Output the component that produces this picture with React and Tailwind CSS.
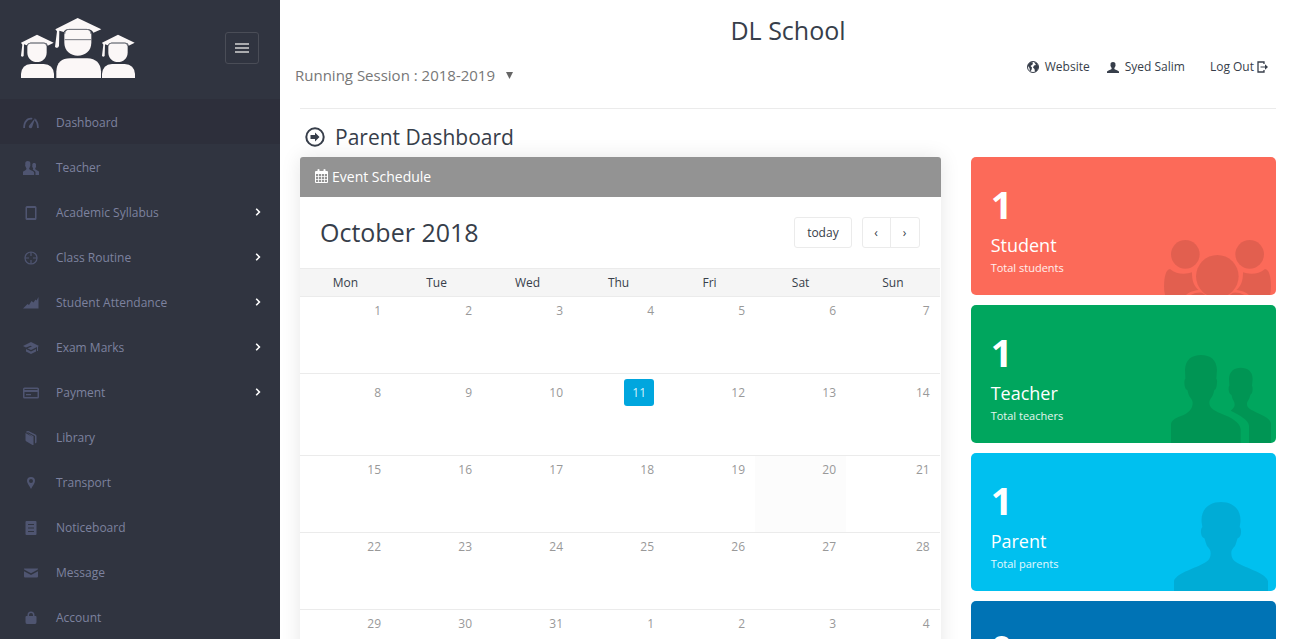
import React from 'react';

const UserShape = (props) => (
  <svg viewBox="0 0 282 267" fill="currentColor" preserveAspectRatio="none" aria-hidden="true" {...props}>
    <path d="M0 267V238C0 222 40 205 75 191C100 181 110 172 110 154C110 141 102 138 98 130C95 124 94 115 91 109C84 107 82 100 81 93C80 83 82 78 85 75L83 62C79 30 98 0 141 0C184 0 203 30 199 62L197 75C200 78 202 83 201 93C200 100 198 107 191 109C188 115 187 124 184 130C180 138 172 141 172 154C172 172 182 181 207 191C242 205 282 222 282 238V267Z" />
  </svg>
);

const UsersShape = (props) => (
  <svg viewBox="0 0 300 264" fill="currentColor" preserveAspectRatio="none" aria-hidden="true" {...props}>
    <path d="M0 264V207C2 196 12 190 30 183C52 174 65 163 65 143C65 133 56 128 52 116L49 105C42 103 41 95 40 84C40 76 41 73 43 71L42 45C43 14 62 0 90 0C118 0 137 14 138 45L136 71C138 73 139 76 138 84C137 95 136 103 130 105L127 116C123 128 115 133 115 143C115 158 128 165 148 175C182 188 206 202 209 222V264Z" />
    <path d="M234 264V212C233 196 207 180 179 167C186 160 191 156 191 149C191 139 185 136 183 127C182 120 181 119 178 118C174 114 172 104 173 98C173 94 174 93 175 92L174 72C174 49 190 38 209 38C230 38 245 49 245 72L243 92C246 96 246 112 240 118C238 119 238 122 236 127C233 137 228 139 228 148C228 160 242 166 258 173C280 182 300 193 300 206V264Z" />
  </svg>
);

const GroupShape = (props) => (
  <svg viewBox="0 0 321 165" fill="currentColor" aria-hidden="true" {...props}>
    <circle cx="64" cy="43" r="43" />
    <circle cx="257" cy="43" r="43" />
    <circle cx="160" cy="109" r="64" />
    <path d="M3 165Q0 155 0 140C0 110 6 88 18 87C38 104 65 104 84 97C84 124 90 138 104 150C88 152 73 158 66 165Z" />
    <path d="M318 165Q321 155 321 140C321 110 315 88 303 87C283 104 256 104 237 97C237 124 231 138 217 150C233 152 248 158 255 165Z" />
    <path d="M80 165Q96 156 114 158L124 165ZM241 165Q225 156 207 158L197 165Z" />
  </svg>
);

const Icon = ({ children, className = 'h-4 w-4' }) => (
  <svg viewBox="0 0 16 16" className={className} fill="currentColor" aria-hidden="true">{children}</svg>
);

const icons = {
  gauge: (
    <Icon>
      <path d="M9.5 3.1C5.8 1.800 0.300 4.500 0.200 13H2C2 6.500 5.800 3.700 9 4.600ZM12.900 3.400L11.600 5.600L12.600 6.700C13.600 8.300 14 10.200 14 13H15.800C15.900 9.500 15 7 13.700 5.400ZM12.300 2.800L6.200 10.400C5.400 11.600 5.900 12.700 6.800 13.100C7.800 13.500 8.800 13 9.200 12Z" />
    </Icon>
  ),
  users: <UsersShape className="h-3.5 w-4" />,
  tablet: (
    <Icon><path fillRule="evenodd" d="M4 1H12A1.500 1.500 0 0 1 13.500 2.500V13.500A1.500 1.500 0 0 1 12 15H4A1.500 1.500 0 0 1 2.500 13.500V2.500A1.500 1.500 0 0 1 4 1ZM4 3V13H12V3Z" /></Icon>
  ),
  target: (
    <Icon><g fill="none" stroke="currentColor" strokeWidth="1.200"><circle cx="8" cy="8" r="6" /><path d="M8 2V6M8 10V14M2 8H6M10 8H14" /></g></Icon>
  ),
  chart: <Icon><path d="M0 13.500L4.500 9L6 10L8.500 6L10.500 7.500L12.500 4.500L13.500 5.500L15.500 2V13.500Z" /></Icon>,
  cap: (
    <Icon><path d="M8 2L0 6L3 7.500L7.500 5.800L9 6.500L4.500 8.300L8 10L14 7V11H15V6.400L16 6ZM3 9V11.500L8 14L13 11.500V9L8 11.500Z" /></Icon>
  ),
  card: (
    <Icon><path fillRule="evenodd" d="M1.500 2.500H14.500A1.500 1.500 0 0 1 16 4V12A1.500 1.500 0 0 1 14.500 13.500H1.500A1.500 1.500 0 0 1 0 12V4A1.500 1.500 0 0 1 1.500 2.500ZM1.500 4V5H14.500V4ZM1.500 7V12H14.500V7ZM3 9H8V10.200H3Z" /></Icon>
  ),
  book: (
    <Icon><path d="M2.500 3L9.500 7V15L3.500 11.500Q2.500 11 2.500 10ZM3 2Q4 0.500 5.500 1L12.500 4.500Q13.500 5 13.500 6V12.500L12 13.500V6L5 2.300Q4.300 2.300 4 2.700L10.500 6.300V15H9.500V7Z" /></Icon>
  ),
  pin: <Icon><path fillRule="evenodd" d="M8 2A4 4 0 0 1 12 6C12 8.500 9.500 10.500 8 14C6.500 10.500 4 8.500 4 6A4 4 0 0 1 8 2ZM8 4A2 2 0 1 0 8 8A2 2 0 1 0 8 4Z" /></Icon>,
  doc: (
    <Icon><path fillRule="evenodd" d="M3.500 1H12.500A1 1 0 0 1 13.500 2V14A1 1 0 0 1 12.500 15H3.500A1 1 0 0 1 2.500 14V2A1 1 0 0 1 3.500 1ZM5 4V5H11V4ZM5 7.500V8.500H11V7.500ZM5 11V12H11V11Z" /></Icon>
  ),
  mail: <Icon><path d="M1 3.500H15Q15 4.500 14.500 4.800L8 8.300L1.500 4.800Q1 4.500 1 3.500ZM1 6.200L8 9.900L15 6.200V11.500Q15 12.500 14 12.500H2Q1 12.500 1 11.500Z" /></Icon>,
  lock: <Icon><path fillRule="evenodd" d="M4.500 6V5A3.500 3.500 0 0 1 11.500 5V6H12.500Q13.500 6 13.500 7V12Q13.500 14 12 14H4Q2.500 14 2.500 12V7Q2.500 6 3.500 6ZM6 6H10V5A2 2 0 0 0 6 5Z" /></Icon>,
};

const menu = [
  { label: 'Dashboard', icon: 'gauge', active: true },
  { label: 'Teacher', icon: 'users' },
  { label: 'Academic Syllabus', icon: 'tablet', sub: true },
  { label: 'Class Routine', icon: 'target', sub: true },
  { label: 'Student Attendance', icon: 'chart', sub: true },
  { label: 'Exam Marks', icon: 'cap', sub: true },
  { label: 'Payment', icon: 'card', sub: true },
  { label: 'Library', icon: 'book' },
  { label: 'Transport', icon: 'pin' },
  { label: 'Noticeboard', icon: 'doc' },
  { label: 'Message', icon: 'mail' },
  { label: 'Account', icon: 'lock' },
];

const Logo = () => (
  <svg viewBox="0 0 342 180" className="h-[60px] w-[114px]" role="img" aria-label="School logo">
    <g fill="#fbf7f7">
      <path d="M170 0L241 34L217 44Q212 33 198 33H144Q132 33 128 42L115 38L114 84Q109 94 102 86L108 40L103 34Z" />
      <path d="M130 50Q130 35 145 35H196Q211 35 211 50V74C211 98 192 113 170 113C149 113 130 98 130 74Z" />
      <path d="M106 180V160Q108 121 148 121H199Q238 123 240 160V180Z" />
      {[0, 243].map((x) => (
        <g key={x} transform={'translate(' + x + ' 0)'}>
          <path d="M48 50L98 74L80 83Q79 74 70 74H28Q20 74 17 82L9 79L8 114Q3 119 0 113L4 80L0 74Z" />
          <path d="M19 86Q19 76 29 76H68Q77 76 77 86V104C77 121 63 132 48 132C33 132 19 121 19 104Z" />
          <path d="M0 180V168Q2 140 30 138H68Q97 140 99 168V180Z" />
        </g>
      ))}
    </g>
    <path d="M131 65H210M131 48Q132 34 145 34H196Q209 34 210 48M19 84Q20 75 29 75H68Q76 75 77 84M262 84Q263 75 272 75H311Q319 75 320 84" fill="none" stroke="#777a82" strokeWidth="3" />
  </svg>
);

const Sidebar = () => (
  <aside className="w-[280px] shrink-0 bg-[#303440]">
    <div className="flex h-[99px] items-start justify-between pl-[21px] pr-[21px] pt-[18px]">
      <a href="#home"><Logo /></a>
      <button type="button" aria-label="Toggle menu" className="mt-3.5 flex h-8 w-[34px] items-center justify-center rounded-[3px] border border-[#4a4d57] text-[#aaabae]">
        <svg viewBox="0 0 14 10" className="h-2.5 w-3.5" fill="currentColor" aria-hidden="true">
          <path d="M0 0H14V2H0ZM0 4H14V6H0ZM0 8H14V10H0Z" />
        </svg>
      </button>
    </div>
    <nav>
      <ul>
        {menu.map((m) => (
          <li key={m.label}>
            <a href={'#' + m.label.toLowerCase().replace(' ', '-')} className={'flex h-[45px] items-center pl-[23px] pr-[19px] pt-0.5 text-[12px] text-[#7d829f] ' + (m.active ? 'bg-[#2d2f3b]' : '')}>
              <span className="mr-[17px] flex w-4 justify-center text-[#4f5571]">{icons[m.icon]}</span>
              <span className="flex-1">{m.label}</span>
              {m.sub && (
                <svg viewBox="0 0 6 8" className="mb-0.5 h-2 w-1.5 text-white" fill="none" stroke="currentColor" strokeWidth="1.600" aria-hidden="true">
                  <path d="M1.200 0.800L4.400 4L1.200 7.200" />
                </svg>
              )}
            </a>
          </li>
        ))}
      </ul>
    </nav>
  </aside>
);

const Header = () => (
  <header className="border-b border-[#ebebeb] pt-[15px]">
    <h2 className="text-center text-[25px] leading-[30px]">DL School</h2>
    <div className="flex h-[63px] items-start justify-between">
      <button type="button" className="-ml-[5px] mt-5 flex items-center gap-[11px] text-[15px] leading-5 text-[#777777]">
        Running Session : 2018-2019
        <svg viewBox="0 0 7 7" className="h-[7px] w-[7px]" fill="#666" aria-hidden="true"><path d="M0 0H7L3.500 7Z" /></svg>
      </button>
      <div className="mr-2 mt-[13px] flex text-[12px] leading-[18px]">
        <a href="#website" className="mr-[17px] flex items-center gap-1.5">
          <svg viewBox="0 0 12 12" className="h-3 w-3" aria-hidden="true">
            <circle cx="6" cy="6" r="5.500" fill="none" stroke="currentColor" />
            <path d="M1 3.500L3.500 1L6 1.500L5.500 3.500L3.500 5L5 6.500L4.500 9L3 10.500L2.500 7L1 5ZM7 1L10 2L11.500 6L10 10L8 11L7.500 8L6 6.500L7 4.500L9 4Z" fill="currentColor" />
          </svg>
          Website
        </a>
        <a href="#profile" className="mr-[25px] flex items-center gap-1.5">
          <UserShape className="h-[11px] w-3" />
          Syed Salim
        </a>
        <a href="#logout" className="flex items-center gap-[3px]">
          Log Out
          <svg viewBox="0 0 11 12" className="h-3 w-[11px]" aria-hidden="true">
            <path d="M7 3V1H1V11H7V9" fill="none" stroke="currentColor" strokeWidth="1.300" />
            <path d="M3.500 5.400H8V3.300L11 6L8 8.700V6.600H3.500Z" fill="currentColor" />
          </svg>
        </a>
      </div>
    </div>
  </header>
);

const days = ['Mon', 'Tue', 'Wed', 'Thu', 'Fri', 'Sat', 'Sun'];
const weeks = [
  [1, 2, 3, 4, 5, 6, 7],
  [8, 9, 10, 11, 12, 13, 14],
  [15, 16, 17, 18, 19, 20, 21],
  [22, 23, 24, 25, 26, 27, 28],
  [29, 30, 31, 1, 2, 3, 4],
];

const Calendar = () => (
  <section className="rounded-[3px] bg-white pr-px shadow-[0_0_20px_rgba(0,0,0,0.1)]">
    <h4 className="-mr-px flex h-10 items-center gap-1 rounded-t-[3px] bg-[#939393] px-[15px] pb-0.5 text-[14px] text-white">
      <svg viewBox="0 0 13 14" className="h-3.5 w-[13px]" fill="currentColor" aria-hidden="true">
        <path fillRule="evenodd" d="M1 2H12Q13 2 13 3V13Q13 14 12 14H1Q0 14 0 13V3Q0 2 1 2ZM1 5V7H3.200V5ZM4 5V7H6.200V5ZM7 5V7H9.200V5ZM10 5V7H12V5ZM1 7.800V10H3.200V7.800ZM4 7.800V10H6.200V7.800ZM7 7.800V10H9.200V7.800ZM10 7.800V10H12V7.800ZM1 10.800V13H3.200V10.800ZM4 10.800V13H6.200V10.800ZM7 10.800V13H9.200V10.800ZM10 10.800V13H12V10.800Z" />
        <path d="M2.500 0.500Q3.500 -0.500 4.500 0.500V3.500H2.500ZM8.500 0.500Q9.500 -0.500 10.500 0.500V3.500H8.500Z" />
      </svg>
      Event Schedule
    </h4>
    <div className="flex h-[71px] items-start justify-between px-5 pt-5">
      <h2 className="text-[25px] leading-[30px]">October 2018</h2>
      <div className="flex h-[31px] text-[12px]">
        <button type="button" className="mr-2.5 rounded-[3px] border border-[#ebebeb] px-3">today</button>
        <button type="button" aria-label="Previous month" className="w-[29px] rounded-l-[3px] border border-[#ebebeb]">‹</button>
        <button type="button" aria-label="Next month" className="-ml-px w-[30px] rounded-r-[3px] border border-[#ebebeb]">›</button>
      </div>
    </div>
    <table className="w-full table-fixed border-collapse text-[12px]">
      <thead>
        <tr className="h-7 border-y border-[#ebebeb] bg-[#f5f5f5]">
          {days.map((d, i) => <th key={d} scope="col" className={'p-0 font-normal ' + (i < 6 ? 'w-[14.23%]' : '')}>{d}</th>)}
        </tr>
      </thead>
      <tbody className="text-[#999999]">
        {weeks.map((w, r) => (
          <tr key={r} className={'border-b border-[#ebebeb] ' + (r === 1 ? 'h-[82px]' : 'h-[77px]')}>
            {w.map((n, c) => {
              const today = r === 1 && n === 11;
              return (
                <td key={c} className={'px-2.5 py-[5px] text-right align-top leading-[18px] ' + (r === 2 && n === 20 ? 'bg-[#fcfcfc]' : '')}>
                  <span className={today ? 'inline-block rounded-[3px] bg-[#00a6de] px-2 py-[5px] leading-[17px] text-[#d5f1fb]' : r === 1 ? 'inline-block py-[5px]' : ''}>{n}</span>
                </td>
              );
            })}
          </tr>
        ))}
      </tbody>
    </table>
  </section>
);

const tiles = [
  { num: 1, title: 'Student', text: 'Total students', bg: 'bg-[#fc6a59]', icon: <GroupShape className="absolute bottom-0 right-[5px] h-[55px] w-[107px] text-black/10" /> },
  { num: 1, title: 'Teacher', text: 'Total teachers', bg: 'bg-[#00a65e]', icon: <UsersShape className="absolute bottom-0 right-[5px] h-[88px] w-[100px] text-black/10" /> },
  { num: 1, title: 'Parent', text: 'Total parents', bg: 'bg-[#00c0ef]', icon: <UserShape className="absolute bottom-0 right-2 h-[89px] w-[94px] text-black/10" /> },
  { num: 0, bg: 'bg-[#0073b5]' },
];

const Tile = ({ num, title, text, bg, icon }) => (
  <section className={'relative min-h-[138px] overflow-hidden rounded-[5px] px-5 pb-4 pt-5 text-white ' + bg}>
    {icon}
    <div className="text-[38px] leading-[54px] font-bold">{num}</div>
    {title && <h3 className="mt-1 text-[18px] leading-5">{title}</h3>}
    {text && <p className="mt-[5px] text-[11px] leading-4 text-white/90">{text}</p>}
  </section>
);

export default function App() {
  return (
    <div className="flex min-h-screen bg-white font-['Open_Sans','Noto_Sans',sans-serif] text-[#373e4a]">
      <Sidebar />
      <main className="min-w-0 flex-1 pl-5 pr-[18px]">
        <Header />
        <h3 className="flex items-center gap-2.5 px-[5px] pb-2 pt-4 text-[21px] leading-6">
          <svg viewBox="0 0 20 20" className="h-5 w-5" aria-hidden="true">
            <circle cx="10" cy="10" r="8.700" fill="none" stroke="currentColor" strokeWidth="2" />
            <path d="M5.500 8H10V5.500L14.500 10L10 14.500V12H5.500Z" fill="currentColor" />
          </svg>
          Parent Dashboard
        </h3>
        <div className="-mx-[15px] flex">
          <div className="w-2/3 px-[15px]"><Calendar /></div>
          <div className="flex w-1/3 flex-col gap-2.5 px-[15px]">
            {tiles.map((t, i) => <Tile key={i} {...t} />)}
          </div>
        </div>
      </main>
    </div>
  );
}
